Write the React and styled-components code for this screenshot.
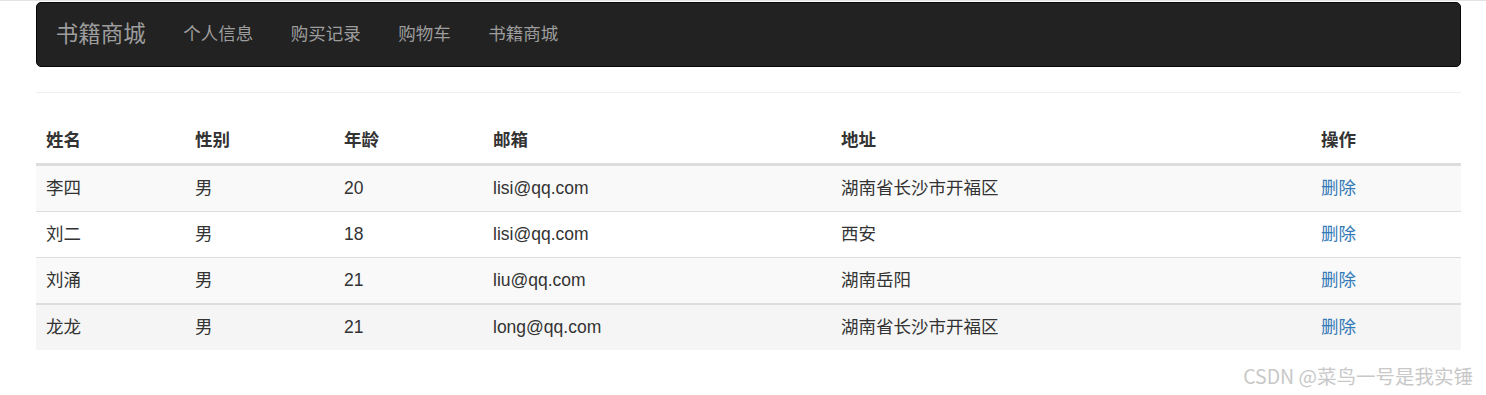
import React from "react";
import styled, { createGlobalStyle } from "styled-components";

const users = [
  { name: "李四", sex: "男", age: 20, email: "lisi@qq.com", address: "湖南省长沙市开福区" },
  { name: "刘二", sex: "男", age: 18, email: "lisi@qq.com", address: "西安" },
  { name: "刘涌", sex: "男", age: 21, email: "liu@qq.com", address: "湖南岳阳" },
  { name: "龙龙", sex: "男", age: 21, email: "long@qq.com", address: "湖南省长沙市开福区", hover: true },
];

const columns = [149, 149, 149, 348, 480, 150];

function App() {
  return (
    <>
      <GlobalStyle />
      <Page>
        <Container>
          <Navbar>
            <Brand>书籍商城</Brand>
            <NavList>
              <NavLink>个人信息</NavLink>
              <NavLink>购买记录</NavLink>
              <NavLink>购物车</NavLink>
              <NavLink>书籍商城</NavLink>
            </NavList>
          </Navbar>
          <Divider />
          <Table>
            <colgroup>
              {columns.map((w, i) => (
                <col key={i} style={{ width: w }} />
              ))}
            </colgroup>
            <thead>
              <tr>
                <Th>姓名</Th>
                <Th>性别</Th>
                <Th>年龄</Th>
                <Th>邮箱</Th>
                <Th>地址</Th>
                <Th>操作</Th>
              </tr>
            </thead>
            <tbody>
              {users.map((u, i) => (
                <Row key={i} $striped={i % 2 === 0} $hover={u.hover}>
                  <Td>{u.name}</Td>
                  <Td>{u.sex}</Td>
                  <Td>{u.age}</Td>
                  <Td>{u.email}</Td>
                  <Td>{u.address}</Td>
                  <Td>
                    <DeleteLink href="#">删除</DeleteLink>
                  </Td>
                </Row>
              ))}
            </tbody>
          </Table>
        </Container>
        <Watermark>CSDN @菜鸟一号是我实锤</Watermark>
      </Page>
    </>
  );
}

const GlobalStyle = createGlobalStyle`
  html, body {
    margin: 0;
    background: #fff;
  }
  body {
    font-family: "Liberation Sans", "Noto Sans CJK SC", sans-serif;
    font-size: 17.5px;
    line-height: 1.428571;
    color: #333;
  }
  * {
    box-sizing: border-box;
  }
`;

const Page = styled.div`
  position: relative;
  height: 395px;
  border-top: 1px solid #e3e3e3;
  padding-top: 1px;
  overflow: hidden;
`;

const Container = styled.div`
  width: 1425px;
  margin-left: 36px;
`;

const Navbar = styled.nav`
  display: flex;
  align-items: center;
  height: 65px;
  background: #222;
  border: 1px solid #080808;
  border-radius: 5px;
  margin-bottom: 25px;
`;

const Brand = styled.a`
  padding: 0 18.75px;
  font-size: 22.5px;
  line-height: 25px;
  color: #9d9d9d;
`;

const NavList = styled.div`
  display: flex;
`;

const NavLink = styled.a`
  padding: 0 18.75px;
  font-size: 17.5px;
  line-height: 25px;
  color: #9d9d9d;
`;

const Divider = styled.hr`
  margin: 0 0 25px;
  border: 0;
  border-top: 1px solid #eee;
`;

const Table = styled.table`
  width: 100%;
  border-collapse: collapse;
  border-spacing: 0;
  table-layout: fixed;
`;

const Th = styled.th`
  text-align: left;
  font-weight: bold;
  padding: 10px;
  line-height: 25px;
  border-bottom: 3px solid #ddd;
`;

const Row = styled.tr`
  background: ${(p) => (p.$hover ? "#f5f5f5" : p.$striped ? "#f9f9f9" : "#fff")};
  border-top: ${(p) => (p.$hover ? "2px" : "1px")} solid #ddd;
`;

const Td = styled.td`
  padding: 10px;
  line-height: 25px;
  vertical-align: top;
`;

const DeleteLink = styled.a`
  color: #337ab7;
  text-decoration: none;
`;

const Watermark = styled.div`
  position: absolute;
  right: 13px;
  bottom: 5px;
  font-family: "Noto Sans CJK SC", sans-serif;
  font-size: 19.5px;
  color: #c8c8c8;
  text-shadow: 0 0 1px #fff;
`;

export default App;
